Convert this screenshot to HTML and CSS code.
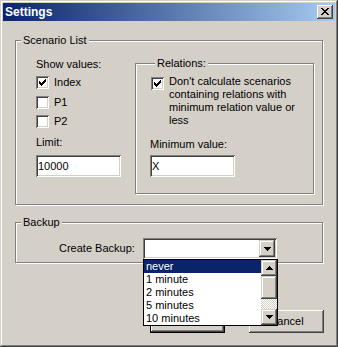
FILE: index.html
```html
<!DOCTYPE html>
<html lang="en">
  <head>
    <meta charset="UTF-8" />
    <title>Settings</title>
    <link rel="stylesheet" href="styles.css">
  </head>
  <body>
    <div class="window">
      <div class="titlebar">
        <span class="title">Settings</span>
        <button class="close">
          <svg width="8" height="7" viewBox="0 0 8 7"><path d="M0 0h2v1h-2z M6 0h2v1h-2z M1 1h2v1h-2z M5 1h2v1h-2z M2 2h4v1h-4z M3 3h2v1h-2z M2 4h4v1h-4z M1 5h2v1h-2z M5 5h2v1h-2z M0 6h2v1h-2z M6 6h2v1h-2z" fill="#000"/></svg>
        </button>
      </div>

      <div class="content">
        <div class="group scenario">
          <span class="group-title">Scenario List</span>
          <div class="cols">
            <div class="col-left">
              <div class="label">Show values:</div>
              <div class="check-list">
                <div class="check">
                  <span class="box"><svg width="7" height="7" viewBox="0 0 7 7"><path d="M6 0h1v1h-1z M5 1h2v1h-2z M0 2h1v1h-1z M4 2h3v1h-3z M0 3h2v1h-2z M3 3h3v1h-3z M0 4h5v1h-5z M1 5h3v1h-3z M2 6h1v1h-1z" fill="#000"/></svg></span>
                  <span>Index</span>
                </div>
                <div class="check">
                  <span class="box"></span>
                  <span>P1</span>
                </div>
                <div class="check">
                  <span class="box"></span>
                  <span>P2</span>
                </div>
              </div>
              <div class="label limit-label">Limit:</div>
              <div class="edit">10000</div>
            </div>

            <div class="group relations">
              <span class="group-title">Relations:</span>
              <div class="check relation-check">
                <span class="box"><svg width="7" height="7" viewBox="0 0 7 7"><path d="M6 0h1v1h-1z M5 1h2v1h-2z M0 2h1v1h-1z M4 2h3v1h-3z M0 3h2v1h-2z M3 3h3v1h-3z M0 4h5v1h-5z M1 5h3v1h-3z M2 6h1v1h-1z" fill="#000"/></svg></span>
                <span>Don't calculate scenarios<br>containing relations with<br>minimum relation value or<br>less</span>
              </div>
              <div class="label min-label">Minimum value:</div>
              <div class="edit">X</div>
            </div>
          </div>
        </div>

        <div class="group backup">
          <span class="group-title">Backup</span>
          <div class="backup-row">
            <span class="backup-label">Create Backup:</span>
            <div class="combo">
              <div class="combo-field"></div>
              <span class="raised combo-btn">
                <svg width="7" height="4" viewBox="0 0 7 4"><path d="M0 0h7v1h-7z M1 1h5v1h-5z M2 2h3v1h-3z M3 3h1v1h-1z" fill="#000"/></svg>
              </span>
              <div class="dropdown">
                <ul class="options">
                  <li class="selected">never</li>
                  <li>1 minute</li>
                  <li>2 minutes</li>
                  <li>5 minutes</li>
                  <li>10 minutes</li>
                </ul>
                <div class="scrollbar">
                  <span class="raised sb-btn">
                    <svg width="7" height="4" viewBox="0 0 7 4"><path d="M3 0h1v1h-1z M2 1h3v1h-3z M1 2h5v1h-5z M0 3h7v1h-7z" fill="#000"/></svg>
                  </span>
                  <span class="raised sb-thumb"></span>
                  <span class="sb-track"></span>
                  <span class="raised sb-btn">
                    <svg width="7" height="4" viewBox="0 0 7 4"><path d="M0 0h7v1h-7z M1 1h5v1h-5z M2 2h3v1h-3z M3 3h1v1h-1z" fill="#000"/></svg>
                  </span>
                </div>
              </div>
            </div>
          </div>
        </div>

        <div class="buttons">
          <!-- caption is covered by the open list -->
          <button class="btn default" aria-label="OK"></button>
          <button class="btn">Cancel</button>
        </div>
      </div>
    </div>
  </body>
</html>
```

FILE: styles.css
```css
body {
  margin: 0;
  background: #d4d0c8;
  font-family: "Liberation Sans", Arial, sans-serif;
  font-size: 11px;
  line-height: 13px;
  color: #000;
}

.window {
  width: 338px;
  height: 347px;
  box-sizing: border-box;
  padding: 3px;
  background: #d4d0c8;
  box-shadow: inset -1px -1px #404040, inset 1px 1px #d4d0c8,
    inset -2px -2px #808080, inset 2px 2px #fff;
  display: flex;
  flex-direction: column;
}

/* title bar */
.titlebar {
  height: 18px;
  display: flex;
  align-items: center;
  padding-left: 2px;
  background: linear-gradient(to right, #0a246a, #a6caf0);
}

.title {
  color: #fff;
  font-weight: bold;
  font-size: 12px;
}

.close {
  margin-left: auto;
  margin-right: 2px;
  width: 16px;
  height: 14px;
  padding: 0;
  border: none;
  background: #d4d0c8;
  box-shadow: inset -1px -1px #404040, inset 1px 1px #fff,
    inset -2px -2px #808080, inset 2px 2px #d4d0c8;
  display: flex;
  justify-content: center;
  align-items: center;
}

.close svg {
  margin: 0 1px 1px 0;
}

svg {
  display: block;
  shape-rendering: crispEdges;
}

/* group boxes */
.content {
  padding: 0 12px;
  display: flex;
  flex-direction: column;
}

.group {
  border: 1px solid #808080;
  box-shadow: inset 1px 1px #fff, 1px 1px #fff;
}

.group-title {
  display: block;
  width: fit-content;
  margin: -7px 0 0 5px;
  padding: 0 2px;
  background: #d4d0c8;
}

.scenario {
  margin-top: 19px;
}

.cols {
  display: flex;
  padding: 11px 8px 10px 20px;
}

.col-left {
  flex: 0 0 99px;
}

.check-list {
  margin-top: 5px;
  display: flex;
  flex-direction: column;
  gap: 7px;
}

.check-list .check:last-child {
  margin-top: -1px;
}

.check {
  display: flex;
  align-items: center;
  gap: 5px;
}

.box {
  width: 13px;
  height: 13px;
  box-sizing: border-box;
  flex: none;
  background: #fff;
  box-shadow: inset 1px 1px #808080, inset -1px -1px #fff,
    inset 2px 2px #404040, inset -2px -2px #d4d0c8;
  padding: 3px;
}

.limit-label {
  margin-top: 8px;
}

.edit {
  margin-top: 6px;
  width: 85px;
  height: 22px;
  box-sizing: border-box;
  padding: 2px 2px;
  line-height: 18px;
  background: #fff;
  box-shadow: inset 1px 1px #808080, inset -1px -1px #fff,
    inset 2px 2px #404040, inset -2px -2px #d4d0c8;
}

.relations {
  flex: 1;
  margin-top: 5px;
  padding: 0 8px 16px 14px;
}

.relation-check {
  margin-top: 5px;
  align-items: flex-start;
  white-space: nowrap;
}

.relation-check .box {
  margin: 2px 0 0 1px;
}

.min-label {
  margin-top: 11px;
}

.relations .edit {
  margin-top: 4px;
}

/* backup */
.backup {
  margin-top: 17px;
  padding: 0 0 3px 43px;
}

.backup .group-title {
  margin-left: -38px;
}

.backup-row {
  margin-top: 9px;
  display: flex;
  align-items: center;
}

.backup-label {
  width: 84px;
}

.combo {
  position: relative;
  width: 134px;
  height: 21px;
  box-sizing: border-box;
  padding: 2px;
  display: flex;
  background: #fff;
  box-shadow: inset 1px 1px #808080, inset -1px -1px #fff,
    inset 2px 2px #404040, inset -2px -2px #d4d0c8;
}

.combo-field {
  flex: 1;
}

.raised {
  background: #d4d0c8;
  box-shadow: inset -1px -1px #404040, inset 1px 1px #d4d0c8,
    inset -2px -2px #808080, inset 2px 2px #fff;
  display: flex;
  justify-content: center;
  align-items: center;
}

.combo-btn {
  width: 16px;
}

.dropdown {
  position: absolute;
  top: 100%;
  left: 0;
  z-index: 2;
  width: 135px;
  height: 67px;
  box-sizing: border-box;
  border: 1px solid #000;
  background: #fff;
  display: flex;
}

.options {
  flex: 1;
  margin: 0;
  padding: 0;
  list-style: none;
}

.options li {
  height: 13px;
  padding-left: 2px;
}

.options .selected {
  background: #0a246a;
  color: #fff;
}

.scrollbar {
  width: 16px;
  display: flex;
  flex-direction: column;
}

.sb-btn {
  height: 16px;
}

.sb-thumb {
  height: 23px;
}

.sb-track {
  flex: 1;
  background: repeating-conic-gradient(#fff 0 25%, #d4d0c8 0 50%) 0 0 / 2px 2px;
}

/* dialog buttons */
.buttons {
  margin: 47px -1px 0 0;
  display: flex;
  justify-content: flex-end;
  gap: 24px;
}

.btn {
  width: 75px;
  height: 23px;
  padding: 0;
  border: none;
  font: inherit;
  color: #000;
  background: #d4d0c8;
  box-shadow: inset -1px -1px #404040, inset 1px 1px #fff,
    inset -2px -2px #808080, inset 2px 2px #d4d0c8;
}

.btn.default {
  border: 1px solid #000;
}
```
